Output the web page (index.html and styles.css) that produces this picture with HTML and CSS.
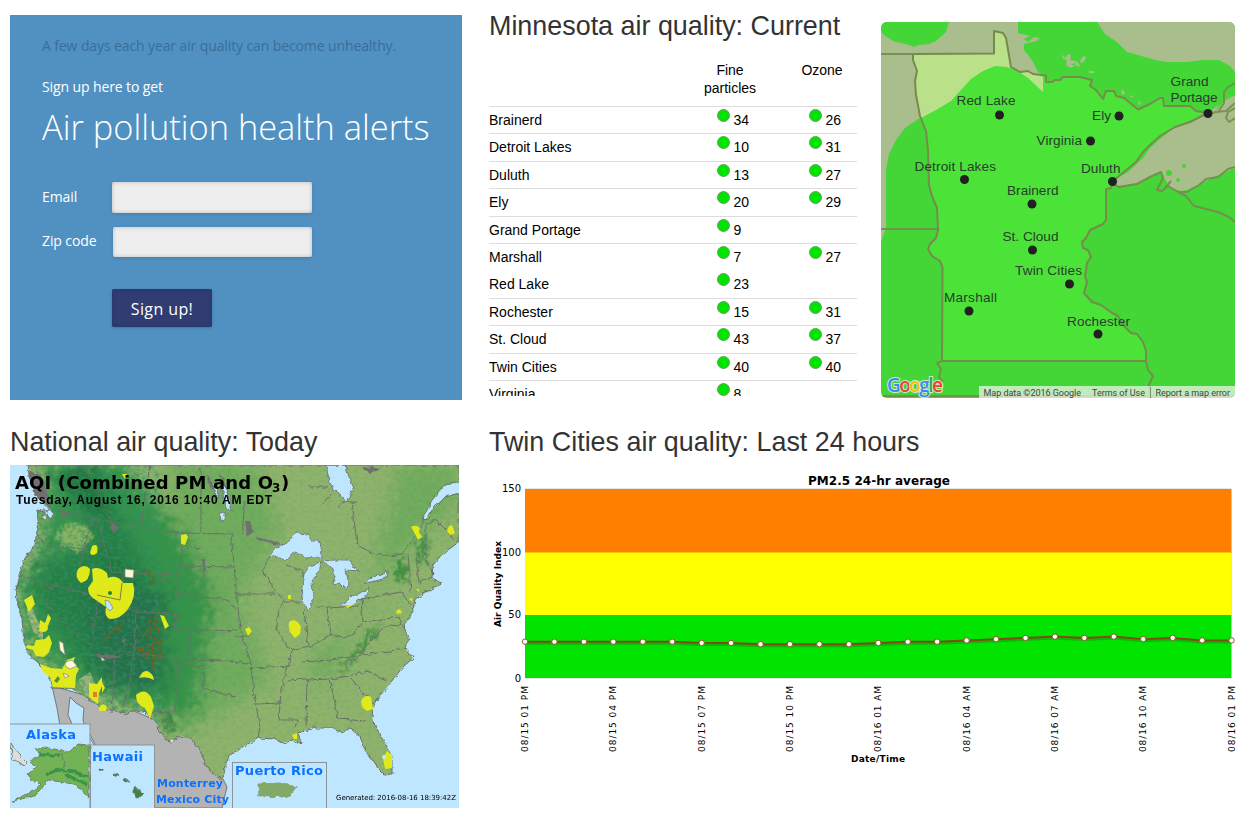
FILE: index.html
```html
<!DOCTYPE html>
<html lang="en">
<head>
<meta charset="utf-8">
<title>Minnesota air quality</title>
<link rel="stylesheet" href="styles.css">
</head>
<body>
<main class="page">
  <div class="row row-top">
    <section class="signup">
      <p class="note">A few days each year air quality can become unhealthy.</p>
      <p class="lead">Sign up here to get</p>
      <h1>Air pollution health alerts</h1>
      <form class="form">
        <label for="email">Email</label><input id="email" class="email" type="text">
        <label for="zip">Zip code</label><input id="zip" class="zip" type="text">
        <button type="button">Sign up!</button>
      </form>
    </section>
    <section class="current">
      <h2>Minnesota air quality: Current</h2>
      <div class="table-wrap">
        <div class="tr head"><span></span><span class="h">Fine<br>particles</span><span class="h">Ozone</span></div>
        <div class="tr"><span>Brainerd</span><span class="fine">34</span><span class="ozone">26</span></div>
        <div class="tr"><span>Detroit Lakes</span><span class="fine">10</span><span class="ozone">31</span></div>
        <div class="tr"><span>Duluth</span><span class="fine">13</span><span class="ozone">27</span></div>
        <div class="tr"><span>Ely</span><span class="fine">20</span><span class="ozone">29</span></div>
        <div class="tr"><span>Grand Portage</span><span class="fine">9</span></div>
        <div class="tr plain"><span>Marshall</span><span class="fine">7</span><span class="ozone">27</span></div>
        <div class="tr"><span>Red Lake</span><span class="fine">23</span></div>
        <div class="tr"><span>Rochester</span><span class="fine">15</span><span class="ozone">31</span></div>
        <div class="tr"><span>St. Cloud</span><span class="fine">43</span><span class="ozone">37</span></div>
        <div class="tr"><span>Twin Cities</span><span class="fine">40</span><span class="ozone">40</span></div>
        <div class="tr"><span>Virginia</span><span class="fine">8</span></div>
      </div>
    </section>
    <svg class="mn-map" viewBox="881 22 354 376" width="354" height="376">
      <defs>
        <path id="mn" d="M913 54L994 53.500V31L1003 33L1006 38L1011 67L1020 72L1028 71L1033 74L1046 75.500L1046 82L1052 82L1055 80L1060 80L1063 77L1080 77L1092 80L1090 86L1096 90L1103 99L1106 91L1114 91L1116 96L1124 98L1138 109.500L1150 104L1160 98L1163 98L1164 106L1190 106L1196 111L1208 113L1190 122L1175 127L1160 136L1150 145L1143 152L1136 162L1125 171L1113 181L1111 188L1106 189V220L1103 224L1090 230L1086 238L1082 242L1083 248L1088 250L1091 257L1087 263L1086 270L1085 276L1087 282L1084 293L1092 302L1101 305L1112 313L1118 316L1122 324L1131 333L1137 334L1143 342L1146 351L1146 361H942L942.500 267L940 261L932 256L928 249L930 244L936 238L938 230L937 208L932 196L929 185L928 150L926 131L920 116L916 95L915 81L917 71L913 60Z"/>
        <clipPath id="mnClip"><use href="#mn"/></clipPath>
      </defs>
      <rect x="881" y="22" width="354" height="376" fill="#44d537"/>
      <path fill="#a9bd8d" d="M881 22H1018V33L1030 36L1024 39L1028 42L1034 37L1040 38L1037 41L1024 44V50L1032 60L1038 72L1045 76L1040 95L918 119L905 128L896 140L889 154L886 170V228L881 242Z"/>
      <path fill="#44d537" d="M881 22H949L946 32L936 41L929 44L918 45L914 47L909 45L893 41L884 35L881 31Z"/>
      <use href="#mn" fill="#4ce338"/>
      <path clip-path="url(#mnClip)" fill="#bbe08a" d="M910 25H1010L1043 78V92L1028 78L1016 70L1007 67L995 66L983 71L971 79L961 90L951 101L936 110L919 119H910Z"/>
      <path fill="#a9bd8d" d="M1097 22L1105 34L1117 42L1127 52L1145 57L1156 60L1166 62H1188L1202 60H1219L1230 66L1235 72V22ZM1208 113L1190 122L1175 127L1160 139L1150 148L1143 158L1128 172L1113 181L1118 186L1138 183L1150 176L1161 172L1165 179L1170 188L1180 191L1187 190L1200 184L1214 177L1235 168V88L1226 99Z"/>
      <path fill="#44d537" d="M1213 114L1222 100L1224 91L1235 84V95L1224 101Z"/>
      <path fill="#a9bd8d" d="M1062 54l3 4 3-4 3 1-1 5 5 1 1 2-5 1 4 2-5 2-4-3 1-5-4-1zM1081 59l3-3 2 1-2 5-4 1zM1076 61l4 4-1 2-4-2zM1089 71h5v2h-5zM1122 89l3 3-1 3-3-2zM1131 95l3 2h-4zM1138 100l4 4-3 1z"/>
      <g fill="#44d537"><circle cx="1184" cy="166" r="2"/><circle cx="1169" cy="173" r="3"/><circle cx="1178" cy="180" r="2"/></g>
      <g fill="none" stroke="#768b4d" stroke-width="2" stroke-linejoin="round">
        <use href="#mn"/>
        <path d="M881 54H913M881 229H938M1209 113L1218 112L1224 103L1224 92L1228 87L1235 83M1216 112L1226 111L1235 103M1235 108L1228 112L1226 118L1229 122L1235 118M1113 184L1119 187L1137 184L1150 177L1161 172L1163 178L1157 190L1162 191L1168 186L1178 192L1186 196L1194 206L1218 212L1229 217L1235 222M1171 181L1165 188M1178 192L1187 192L1199 185L1206 179L1218 177L1228 169L1235 167M942 361L937 363L941 369L939 377L943 382M1146 361L1148 370L1153 376L1149 385L1151 398M881 396H1235" opacity=".9"/>
      </g>
      <g class="dots"><circle cx="999.500" cy="115" r="4.500"/><circle cx="1119" cy="116" r="4.500"/><circle cx="1208" cy="113.500" r="4.500"/><circle cx="1090.500" cy="141" r="4.500"/><circle cx="964.500" cy="179.500" r="4.500"/><circle cx="1112.500" cy="181.500" r="4.500"/><circle cx="1032" cy="204" r="4.500"/><circle cx="1032.500" cy="250" r="4.500"/><circle cx="1069.500" cy="284" r="4.500"/><circle cx="969" cy="311" r="4.500"/><circle cx="1098" cy="334" r="4.500"/></g>
      <g class="city"><text x="956.500" y="105" textLength="59">Red Lake</text><text x="1092" y="119.500" textLength="19">Ely</text><text x="1170.500" y="85.500" textLength="38">Grand</text><text x="1170.500" y="101.500" textLength="47">Portage</text><text x="1036.500" y="144.500" textLength="45.500">Virginia</text><text x="914.500" y="171" textLength="81.500">Detroit Lakes</text><text x="1081" y="173" textLength="39.500">Duluth</text><text x="1007" y="195" textLength="51.500">Brainerd</text><text x="1002.500" y="241" textLength="56">St. Cloud</text><text x="1015" y="275" textLength="67">Twin Cities</text><text x="944" y="302" textLength="53">Marshall</text><text x="1067" y="326" textLength="63">Rochester</text></g>
      <text class="google" x="887" y="392" textLength="56"><tspan fill="#4285f4">G</tspan><tspan fill="#ea4335">o</tspan><tspan fill="#fbbc05">o</tspan><tspan fill="#4285f4">g</tspan><tspan fill="#34a853">l</tspan><tspan fill="#ea4335">e</tspan></text>
      <rect x="979" y="386" width="256" height="12" fill="#f5f5f5" opacity=".7"/>
      <path d="M1150.500 387V398" stroke="#7d956d"/>
      <g class="legal"><text x="983.500" y="396" textLength="97.500">Map data ©2016 Google</text><text x="1092" y="396" textLength="53">Terms of Use</text><text x="1155.500" y="396" textLength="74.500">Report a map error</text></g>
    </svg>
  </div>
  <div class="row row-bottom">
    <section class="national">
      <h2>National air quality: Today</h2>
      <svg class="us-map" viewBox="10 465 449 343" width="449" height="343">
        <defs>
          <path id="land" d="M28 465L29 476L34 488L40 500L50 509L46 512L37 510L38 520L37 531L35 545L25 558L20 572L16 590L17 602L22 620L24 642L28 654L38 663L46 671L51 680L52 688L73 689L102 708L128 714L129 711L145 712L157 723L160 732L170 743L174 740L180 736L190 738L200 750L207 768L212 773L223 779L225 767L230 755L243 747L258 738L275 739L283 743L293 740L302 744L298 733L312 728L333 728L342 733L350 728L360 737L365 750L377 767L385 775L392 774L392 757L382 738L372 720L373 705L387 687L403 667L413 658L405 648L409 640L404 626L413 612L415 599L427 592L442 583L432 578L433 565L445 552L459 542V493L445 497L434 507L426 520L423 518L432 500L445 485L459 482V465Z"/>
          <clipPath id="landClip"><use href="#land"/></clipPath>
          <filter id="soft" x="-30%" y="-30%" width="160%" height="160%"><feGaussianBlur stdDeviation="9" result="b"/><feTurbulence type="fractalNoise" baseFrequency=".13" numOctaves="3" seed="4" result="n"/><feDisplacementMap in="b" in2="n" scale="26" xChannelSelector="R" yChannelSelector="G"/></filter>
          <filter id="ridge" x="-20%" y="-20%" width="140%" height="140%"><feGaussianBlur stdDeviation="2" result="b"/><feTurbulence type="fractalNoise" baseFrequency=".15" numOctaves="3" seed="5" result="n"/><feDisplacementMap in="b" in2="n" scale="18" xChannelSelector="R" yChannelSelector="G"/></filter>
          <filter id="grain" x="0" y="0" width="100%" height="100%"><feTurbulence type="fractalNoise" baseFrequency=".22 .3" numOctaves="4" seed="8"/><feColorMatrix values="0 0 0 0 .03  0 0 0 0 .28  0 0 0 0 .16  3 0 0 0 -1.3"/></filter>
          <filter id="rough" x="-5%" y="-5%" width="110%" height="110%"><feTurbulence type="fractalNoise" baseFrequency=".18" numOctaves="2" seed="2"/><feDisplacementMap in="SourceGraphic" scale="5" xChannelSelector="R" yChannelSelector="G"/></filter>
        </defs>
        <rect x="10" y="465" width="449" height="343" fill="#bfe6ff"/>
        <path d="M52 686L57 708L60 726L85 725L96 746L140 808H222L227 787L223 779L190 735L120 705Z" fill="#b3b3b3" stroke="#777"/>
        <path d="M70 697L68 715L73 726L83 735L94 745L87 733L83 720L84 708L76 703Z" fill="#bfe6ff"/>
        <path d="M70 697L68 715L73 726M94 745L87 733L83 720L84 708L76 703L70 697" fill="none" stroke="#777"/>
        <use href="#land" fill="#90b36c"/>
        <g clip-path="url(#landClip)">
          <g filter="url(#soft)">
            <path fill="#72ac5d" d="M200 460L260 465L280 530L240 600L270 680L210 720L170 740V460ZM400 465L459 465V500L370 590L340 660L320 690L310 660L370 610L380 540Z"/>
            <path fill="#35934a" d="M45 460H120L180 530L215 600L195 720L150 710L70 680L25 640L20 580L45 550Z"/>
            <path fill="#257f45" d="M65 465H100L125 530L160 590L165 650L140 700L90 680L50 620L30 590L50 560L95 545Z"/>
            <path fill="#25714a" d="M80 590L165 590V690H105Z"/>
          </g>
          <g filter="url(#ridge)">
            <path fill="#1f6d36" opacity=".55" d="M50 475L90 465L108 515L85 510L70 495ZM105 555L140 580L125 600L105 570ZM160 710L175 720L172 735L160 725ZM60 525l-14 25-12 18 3 4z"/>
            <path fill="#2b8336" opacity=".75" d="M380 624L368 645L345 670L338 674L352 655L368 632ZM395 562L405 558L408 582L396 580ZM420 535L428 540L424 565L418 565Z"/>
          </g>
          <ellipse cx="74" cy="536" rx="17" ry="13" fill="#8bb25e" filter="url(#ridge)"/>
          <path fill="#9cb575" d="M27 602L32 608L43 633L43 642L33 631L27 612ZM78 680L90 672L102 700L92 705Z"/>
          <rect x="10" y="465" width="150" height="260" filter="url(#grain)" opacity=".6"/>
          <rect x="160" y="465" width="299" height="320" filter="url(#grain)" opacity=".13"/>
          <path filter="url(#rough)" stroke="#6f6420" stroke-width="2" stroke-dasharray="2 2 4 3" fill="none" d="M140 632L162 642L145 648L163 657L137 648L160 670M150 620L153 671M145 630L160 628M155 615L161 658M105 640L124 620L116 632M144 652L160 660M146 569L153 579L149 588"/>
        </g>
        <g fill="#bfe6ff" stroke="#6f7477" stroke-width=".9" filter="url(#rough)">
          <path d="M326 465L329 480L333 490L341 495L346 502L353 489L349 477L345 465Z"/>
          <path d="M268 557L277 547L287 543L292 536L297 533L308 534L311 541L318 541L322 551L321 557L306 558L297 552L286 560L279 557Z"/>
          <path d="M322 562L311 565L304 574L302 588L304 604L307 610L313 603L312 582L319 570Z"/>
          <path d="M322 561L334 560L350 560L354 568L360 571L345 570L348 580L347 590L340 583L333 585L335 574L329 566Z"/>
          <path d="M340 606L350 597L370 589L366 596L350 606Z"/><path d="M363 584L370 578L388 571L387 578Z"/>
          <path d="M212 482L215 483L219 495L217 498ZM221 486L225 484L232 512L226 508ZM220 513L224 514L224 520L221 521ZM51 509L55 516L49 519L44 510ZM106 602l5 1 1 8-5-3z"/>
        </g>
        <g class="states" filter="url(#rough)">
          <use href="#land"/>
          <path d="M60 511L98 519L140 527L180 533L234 534M37 534L46 545L84 549L86 540M20 576L51 585L98 596L119 600M85 549L91 520L96 519M84 548L78 574M98 519L104 544L112 572L180 575M183 534L177 602M119 600L121 590L124 572M98 595L92 645L81 640L46 604L51 586M120 610L136 611L134 652L116 652M136 611L177 615L175 629M134 653L188 660L235 661M180 566L235 567M176 595L226 599L236 610M175 629L237 631M191 630L188 660M115 652L112 713M134 653L123 711M188 660L179 664L175 711L146 712M180 664L204 667V688L215 692L235 696M231 534L235 575L240 630M235 594L275 594M234 636H248M230 662L251 663M250 668L290 666M251 663L254 695L256 704L260 727L258 738M256 704L282 703M240 630L251 663M272 552L263 570L275 590L284 600L279 610L276 626L283 641L292 651L287 670L281 690L279 720H297L296 727M284 602H302M304 610L308 646L292 650M316 607H327L330 635L308 648M327 608L360 606M361 599L363 622L353 635L343 638L330 635M288 680L307 679L306 726M307 680L330 679L338 719L366 721M302 662L331 660L403 649M331 679L349 676L367 671L387 680M350 677L365 695L373 705M350 665L371 640L389 624L402 625M361 599L402 592L411 605M363 622L399 617L404 630M286 565L303 571V578M352 500L357 545L372 553L389 556L402 554L420 530L425 517M408 555L411 592M416 557L419 583L432 577M426 524V560L433 574M426 524L436 520L446 530L453 541M150 465L140 527M201 467V533M245 500L242 535M80 465L92 480L107 510L113 530M308 487H328M322 505L332 492M338 507L346 501L357 503"/>
        </g>
        <g fill="#707070" filter="url(#rough)"><path d="M28 470L40 475L52 508L35 495ZM60 510l8 2-5 5zM111 522l7 5-3 5-5-3zM255 537L268 540L280 543L279 545L260 541ZM245 521h5l3 12-6 2zM206 475l5 4 3 12-3-2zM218 472l5 6 6 15-4-5zM360 468l12-2 8 2-8 5zM90 655l14-1 18 3-14 2zM122 637l4 2-2 5zM203 558h2v12l-2 12-1-12zM152 579l8 1 6-2-2 3zM186 542l8 5 8 1-5 2z"/></g>
        <g fill="#e0ea1b">
          <path d="M92 569Q99 566 107 573L108 578Q118 574 123 583L133 583Q137 596 128 609Q121 619 110 619Q104 617 106 607L96 600Q88 596 88 588L93 581ZM92 546q7-4 5 7q-5 4-7 0zM78 569q7-6 12 0q0 12-9 14q-7-6-3-14zM24 600l8-5 3 9-6 8zM40 620l5 3 3-9 3 4-3 8-9 2zM40 627q7-4 8 0q0 7-9 4zM36 640l9-1 4-4 3 8-3 9-5 5-8-1-3-6-7-2 1-3 7 1zM40 664L51 668L62 669L67 660L75 657L73 663L79 669L76 675L75 688L53 687L50 677L43 672Z"/>
          <path d="M89 683l8 1 5-7v9l-3 7-1 11-9-7zM102 682l3 6-3 5zM99 708q4-7 8-1l-1 4h-7zM139 678q6-13 14-2l1 4q-7-4-15-2zM136 695q9-8 15 2l3 9-4 13-5-11q-9-3-9-13zM181 535l5-1 2 3-3 8-4-1zM160 615l4 1 5 10-4 3zM245 629l4-2 3 4-4 5zM289 622q7-5 12 5l-1 7-5 4q-8-7-6-16zM361 701q4-7 10-4l2 12-6 2q-6-3-6-10zM383 758l4-7 5 4v13l-7 1zM411 527q5-3 9 1l-1 4 3 5-4 3-4-8zM449 526l3-1 3 8-4 2-4-3zM396 611l4-2 2 4-5 1zM409 599l3-1 1 4zM345 606l10-2-7 4zM416 589h3v3zM288 595h3v4h-3zM292 735l5-2v6h-3zM122 474h5l-2 5z"/>
        </g>
        <path fill="#bfe6ff" stroke="#6f7477" stroke-width=".6" d="M105 600l4 1 4 7-3 3-4-4z"/>
        <path fill="none" stroke="#817f40" d="M97 595L120 600L122 583"/>
        <path d="M93 692h4v5h-4z" fill="#e87a1d"/><circle cx="110" cy="593" r="2" fill="#258045"/><circle cx="384" cy="757" r="2" fill="#bfe6ff"/><path fill="#56913a" d="M54 681l4-5 2 3-3 4z"/>
        <g fill="#fff6d5" stroke="#888" stroke-width=".7"><path d="M59 641l4 2 2 12-5-5zM66 662l6-2 5 6-7 3-5-3zM125 569l9 1-1 8-8-1zM63 673l6 3-4 2zM101 657l4 3-3 1zM170 739l4 1-3 4zM42 517l4-2v5z"/></g>
        <g class="inset"><rect x="9.500" y="724" width="80.500" height="85"/><rect x="90.500" y="745" width="64" height="64"/><rect x="232.500" y="762.500" width="94" height="47"/></g>
        <g filter="url(#rough)" stroke="#667060" stroke-width=".8">
          <path fill="#73b255" d="M89 745L78 744L68 753L60 750L48 748L36 749L40 756L30 761L36 767L28 774L31 780L41 783L35 790L13 801L35 796L48 780L60 782L74 784L89 798Z"/>
          <path fill="#ddd" d="M11 743L18 754L26 762L24 766L12 758Z"/>
          <path fill="none" stroke="#39934b" stroke-width="3" d="M46 775L57 770L75 772L88 777M40 755L60 755M66 775L87 784"/>
          <path fill="none" d="M61 751L66 773"/>
          <path fill="#3d844b" d="M100 769l4 1-3 2zM113 774l6 1-3 2zM122 779l7 2-4 1zM134 787l10 6-5 4-5-2z"/>
          <path fill="#83a967" stroke="#8b9b66" d="M258 784L279 783L297 787L290 796L259 797Z"/>
        </g>
        <path d="M264 790H290" stroke="#408644" stroke-width="3" stroke-dasharray="7 2" opacity=".4" filter="url(#rough)"/>
        <g class="map-title"><text x="15" y="489" textLength="258">AQI (Combined PM and O</text><text x="272" y="492">3</text><text x="281" y="489">)</text></g>
        <text class="map-date" x="16" y="503.500" textLength="256">Tuesday, August 16, 2016 10:40 AM EDT</text>
        <g class="place"><text x="26" y="739" textLength="50">Alaska</text><text x="92" y="761" textLength="51">Hawaii</text><text x="235" y="775" textLength="88">Puerto Rico</text><text x="157" y="787" textLength="66" class="small">Monterrey</text><text x="156" y="803" textLength="73" class="small">Mexico City</text></g>
        <text class="generated" x="336" y="800" textLength="120">Generated: 2016-08-16 18:39:42Z</text>
      </svg>
    </section>
    <section class="history">
      <h2>Twin Cities air quality: Last 24 hours</h2>
      <svg class="chart" viewBox="489 465 748 305" width="748" height="305">
        <text class="axis-title big" x="808" y="485" textLength="142">PM2.5 24-hr average</text>
        <rect x="525" y="489" width="707" height="63" fill="#ff7f00"/><rect x="525" y="552" width="707" height="63" fill="#ff0"/><rect x="525" y="615" width="707" height="63" fill="#00e400"/>
        <path d="M525 488.500H1232M525 678.500H1232M1231.500 489V678" stroke="#ddd" opacity=".7"/><path d="M525 552.500H1232" stroke="#ffc400"/>
        <g class="tick"><text x="521" y="492">150</text><text x="521" y="556">100</text><text x="521" y="618">50</text><text x="521" y="682">0</text></g>
        <text class="axis-title" transform="translate(501 627) rotate(-90)" textLength="86">Air Quality Index</text>
        <g id="series"></g><g id="times" class="tick time"></g>
        <text class="axis-title" x="851" y="762" textLength="54">Date/Time</text>
      </svg>
    </section>
  </div>
</main>
<script src="chart.js"></script>
</body>
</html>
```
FILE: styles.css
```css
* { box-sizing: border-box; }
body { margin: 0; background: #fff; color: #000; font-family: "Liberation Sans", Arial, sans-serif; overflow: hidden; }
.page { width: 1257px; height: 837px; padding: 0 10px; }
.row { display: flex; }
.row-top { height: 424px; }
h2 { margin: 0; font-size: 26.9px; font-weight: 400; line-height: 32px; color: #333; white-space: nowrap; }
.signup { width: 452px; height: 385px; margin: 15px 27px 0 0; padding: 20px 32px; background: #5091c2; color: #fff; font: 14px/22px "Open Sans", sans-serif; }
.signup p { margin: 0; letter-spacing: -.11px; }
.signup .note { color: #3a6e99; }
.signup .lead { margin-top: 19px; }
.signup h1 { margin: 9px 0 0; font-size: 34.4px; line-height: 40px; font-weight: 300; white-space: nowrap; }
.form { display: grid; grid-template-columns: 70px 200px; row-gap: 14px; margin-top: 35px; align-items: center; }
.form label { margin-top: -2px; letter-spacing: -.1px; }
.form input { width: 200px; height: 31px; border: 0; border-radius: 2px; background: #eee; box-shadow: inset 0 0 4px #bbb, 0 1px 3px rgba(40,80,120,.3); }
.form .zip { width: 199px; height: 30px; margin-left: 1px; }
.form button { grid-column: 2; width: 100px; height: 38px; margin-top: 18px; padding: 2px 0 0; border: 0; border-radius: 2px; background: #2f3d73; box-shadow: inset 0 0 4px #27366a, 0 1px 3px rgba(30,50,90,.3); color: #fff; font: 16px "Open Sans", sans-serif; letter-spacing: .4px; }
.current { width: 368px; margin: 10px 24px 0 0; }
.table-wrap { height: 343px; margin-top: 11px; overflow: hidden; font-size: 14px; }
.tr { display: grid; grid-template-columns: 184px 114px 70px; height: 27.4px; border-bottom: 1px solid #ddd; line-height: 18px; padding-top: 4px; }
.tr.head { height: 54px; padding-top: 8px; }
.tr.plain { border-color: transparent; }
.h { text-align: center; }
.fine { padding-left: 43.5px; }
.ozone { padding-left: 21.5px; }
.fine::before, .ozone::before { content: ""; display: inline-block; width: 11px; height: 11px; margin-right: 4px; border: 1px solid #5da65b; border-radius: 50%; background: #00e400; transform: translateY(-3px); }
.mn-map { display: block; flex: none; margin-top: 22px; border-radius: 6px; }
.dots { fill: #211f20; }
.city { font-size: 13.6px; fill: #26402a; }
.google { font: 19px "Open Sans", sans-serif; font-weight: 600; paint-order: stroke; stroke: #cbecc7; stroke-width: 2px; }
.legal { font: 9px Roboto, sans-serif; fill: #444; }
.row-bottom h2 { height: 41px; padding-top: 2px; }
.national { width: 479px; }
.us-map, .chart { display: block; overflow: hidden; }
.states { fill: none; stroke: #68706a; stroke-width: 1; }
.inset { fill: #bfe6ff; stroke: #8d9499; }
.map-title { font: bold 18px "DejaVu Sans", sans-serif; }
.map-title text:nth-child(2) { font-size: 12px; }
.map-date { font: bold 12px "Liberation Sans", sans-serif; }
.place { font: bold 13px "DejaVu Sans", sans-serif; fill: #0a72ff; }
.place .small { font-size: 11px; }
.generated { font: 7px "DejaVu Sans", sans-serif; }
.axis-title { font: bold 9px "DejaVu Sans", sans-serif; }
.axis-title.big { font-size: 12px; }
.tick { font: 10px "DejaVu Sans", sans-serif; text-anchor: end; }
.time { font-size: 9px; }
.series-shadow { fill: none; stroke: #158a12; stroke-width: 3; opacity: .5; }
.series-line { fill: none; stroke: #7d4e12; stroke-width: 2; }
.series-dot { fill: #fff; stroke: #8c5a25; }
```
FILE: chart.js
```js
const values = [29,29,29,29,29,29,28,28,27,27,27,27,28,29,29,30,31,32,33,32,33,31,32,30,30];
const points = values.map((v, i) => [525 + i * 29.44, 678.3 - v * 1.263]);
const line = points.map(p => p.join(",")).join(" ");
document.getElementById("series").innerHTML =
  `<polyline class="series-shadow" points="${line}" transform="translate(0 1.5)"/>` +
  `<polyline class="series-line" points="${line}"/>` +
  points.map(([x, y]) => `<circle class="series-dot" cx="${x}" cy="${y}" r="2.7"/>`).join("");
const times = ["08/15 01 PM","08/15 04 PM","08/15 07 PM","08/15 10 PM","08/16 01 AM","08/16 04 AM","08/16 07 AM","08/16 10 AM","08/16 01 PM"];
document.getElementById("times").innerHTML = times.map((t, i) =>
  `<text transform="translate(${528 + i * 88.32} 686) rotate(-90)" textLength="66">${t}</text>`).join("");
```
